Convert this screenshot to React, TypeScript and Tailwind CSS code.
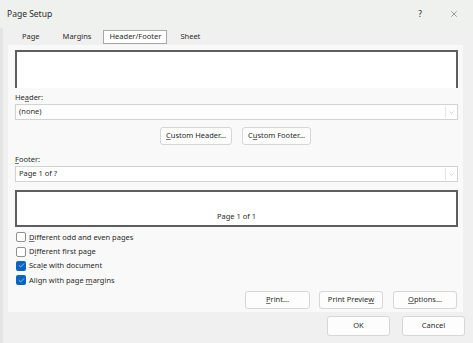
import { X, ChevronDown, Check } from "lucide-react";

function U({ children }: { children: React.ReactNode }) {
  return <span className="underline underline-offset-[1px] decoration-[#777]">{children}</span>;
}

function Btn({ w, children, className = "" }: { w: string; children: React.ReactNode; className?: string }) {
  return (
    <div
      className={`${w} h-full flex items-center justify-center bg-[#fdfdfd] border border-[#d6d6d6] rounded-[3px] text-[7.5px] text-[#2a2a2a] ${className}`}
    >
      {children}
    </div>
  );
}

function Select({ value }: { value: string }) {
  return (
    <div className="h-[16px] w-[443px] bg-white border border-[#d2d2d2] flex items-center">
      <span className="flex-1 pl-[3px] text-[7.5px] text-[#2a2a2a]">{value}</span>
      <div className="w-[11px] h-[12px] mr-[1px] border-l border-[#e4e4e4] flex items-center justify-center">
        <ChevronDown size={7} strokeWidth={1.5} className="text-[#999]" />
      </div>
    </div>
  );
}

function Cb({ checked, children }: { checked?: boolean; children: React.ReactNode }) {
  return (
    <div className="h-[14.4px] flex items-center">
      {checked ? (
        <div className="w-[10px] h-[10px] rounded-[2px] bg-[#0a64c2] flex items-center justify-center">
          <Check size={7} strokeWidth={2} className="text-white" />
        </div>
      ) : (
        <div className="w-[10px] h-[10px] rounded-[2px] border border-[#909090] bg-white" />
      )}
      <span className="ml-[3px] text-[7.5px] text-[#2a2a2a]">{children}</span>
    </div>
  );
}

export default function App() {
  return (
    <div className="w-[473px] h-[343px] bg-[#f0f0f0] flex flex-col overflow-hidden font-['Noto_Sans',sans-serif] text-[#2a2a2a] relative">
      {/* title bar */}
      <div className="h-[28px] bg-[#eef1ee] flex items-center pl-[7px] shrink-0">
        <span className="text-[8.5px]">Page Setup</span>
        <span className="ml-auto text-[8.5px] mr-[27px]">?</span>
        <X size={10} strokeWidth={1.2} className="mr-[14px] text-[#444]" />
      </div>
      {/* tabs */}
      <div className="h-[17px] flex items-center shrink-0 text-[7.5px]">
        <span className="ml-[22px]">Page</span>
        <span className="ml-[23px]">Margins</span>
        <div className="ml-[12px] h-[14px] w-[64px] bg-white border border-[#a8a8a8] flex items-center justify-center">
          Header/Footer
        </div>
        <span className="ml-[13px]">Sheet</span>
      </div>
      {/* panel */}
      <div className="ml-[8px] w-[455px] h-[267px] bg-[#f9f9f9] pl-[7px] pr-[5px] pt-[5px] flex flex-col shrink-0">
        <div className="h-[38px] w-[443px] bg-white border-t-2 border-l-2 border-r-2 border-[#5e5e5e]" />
        <div className="h-[16px] flex items-end text-[7.5px] pb-[1px]">
          <span>
            He<U>a</U>der:
          </span>
        </div>
        <Select value="(none)" />
        <div className="h-[18px] mt-[7px] flex">
          <Btn w="w-[72px]" className="ml-[145px]">
            <U>C</U>ustom Header...
          </Btn>
          <Btn w="w-[69px]" className="ml-[10px]">
            C<U>u</U>stom Footer...
          </Btn>
        </div>
        <div className="h-[21px] flex items-end text-[7.5px] pb-[1px]">
          <span>
            <U>F</U>ooter:
          </span>
        </div>
        <Select value="Page 1 of ?" />
        <div className="mt-[8px] h-[37px] w-[443px] bg-white border-2 border-[#5e5e5e] flex items-end justify-center pb-[3px] text-[7.5px]">
          Page 1 of 1
        </div>
        <div className="mt-[3px] pl-[1px] flex flex-col">
          <Cb>
            <U>D</U>ifferent odd and even pages
          </Cb>
          <Cb>
            D<U>i</U>fferent first page
          </Cb>
          <Cb checked>
            Sca<U>l</U>e with document
          </Cb>
          <Cb checked>
            Align with page <U>m</U>argins
          </Cb>
        </div>
        <div className="h-[18px] mt-[3px] flex">
          <Btn w="w-[65px]" className="ml-[230px]">
            <U>P</U>rint...
          </Btn>
          <Btn w="w-[64px]" className="ml-[9px]">
            Print Previe<U>w</U>
          </Btn>
          <Btn w="w-[64px]" className="ml-[10px]">
            <U>O</U>ptions...
          </Btn>
        </div>
      </div>
      {/* bottom buttons */}
      <div className="h-[20px] mt-[4px] flex shrink-0">
        <Btn w="w-[63px]" className="ml-[327px] border-[#5b9bd5] bg-[#fbfdff]">
          OK
        </Btn>
        <Btn w="w-[63px]" className="ml-[12px]">
          Cancel
        </Btn>
      </div>
      {/* left edge strip */}
      <div className="absolute left-0 top-[28px] bottom-0 w-[3px] bg-[#e4e4e4]" />
    </div>
  );
}
